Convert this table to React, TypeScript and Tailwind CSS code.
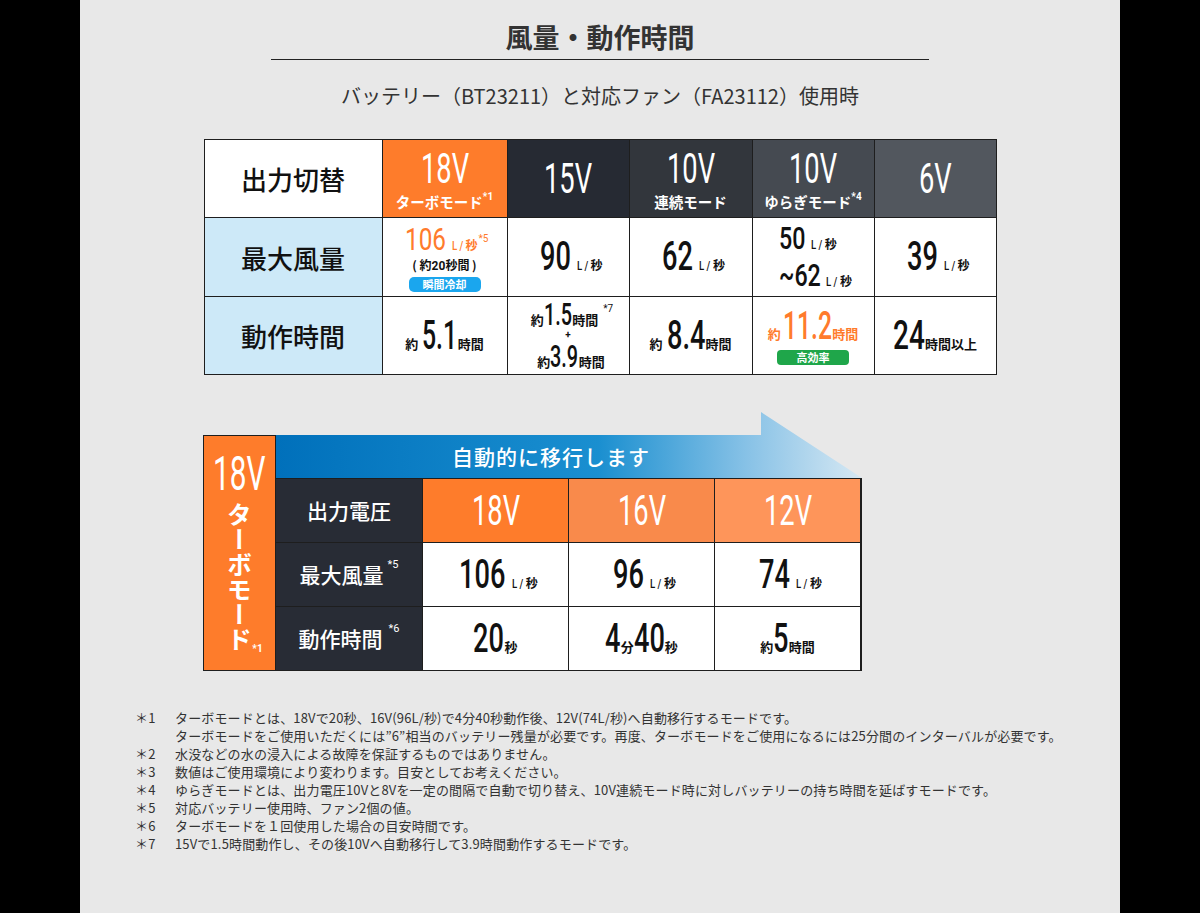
import React from "react"

const JP = "font-['Noto_Sans_CJK_JP','Noto_Sans',sans-serif]"
const RB = "font-['Roboto','Noto_Sans',sans-serif]"

// advance widths of Roboto glyphs, in em
const ADV: Record<string, number> = { ".": 0.263, V: 0.652, "~": 0.68, L: 0.538, "/": 0.41, " ": 0.248 }

// Roboto squeezed horizontally, to stand in for the condensed face of the print
function N({
  t,
  size,
  s = 0.68,
  className = "",
}: {
  t: string
  size: number
  s?: number
  className?: string
}) {
  const w = [...t].reduce((a, c) => a + (ADV[c] ?? 0.5615), 0) * size
  return (
    <span
      className={`${RB} inline-block origin-left whitespace-pre font-medium leading-none ${className}`}
      style={{ fontSize: size, transform: `scaleX(${s})`, marginRight: -w * (1 - s) }}
    >
      {t}
    </span>
  )
}

function Unit({ className = "" }: { className?: string }) {
  return (
    <span className={`ml-[6px] text-[12px] font-bold ${className}`}>
      <N t="L / " size={12} s={0.8} className="font-bold" />
      <span className={JP}>秒</span>
    </span>
  )
}

function Small({ children }: { children: React.ReactNode }) {
  return <span className={`${JP} text-[13px] font-bold leading-none`}>{children}</span>
}

function Sup({ children, className = "" }: { children: React.ReactNode; className?: string }) {
  return (
    <span className={`${RB} relative -top-[8px] text-[10px] font-bold leading-none ${className}`}>
      {children}
    </span>
  )
}

function HeadCell({ v, sub, bg }: { v: string; sub?: React.ReactNode; bg: string }) {
  return (
    <div className={`flex flex-col items-center justify-center text-white ${bg}`}>
      <N t={v} size={42} s={0.65} className="font-normal" />
      {sub && (
        <div className={`${JP} mt-[5px] text-[14.5px] font-bold leading-none`}>{sub}</div>
      )}
    </div>
  )
}

function Cell({ children, className = "" }: { children: React.ReactNode; className?: string }) {
  return (
    <div className={`flex flex-col items-center justify-center bg-white text-[#111] ${className}`}>
      {children}
    </div>
  )
}

function Label({ children, className = "" }: { children: React.ReactNode; className?: string }) {
  return (
    <div
      className={`${JP} flex items-center justify-center text-[26px] font-medium text-[#111] ${className}`}
    >
      {children}
    </div>
  )
}

function AirTable() {
  return (
    <div className="mx-auto mt-[30px] grid w-[793px] grid-cols-[177px_124px_121px_122px_121px_121px] grid-rows-[77px_78px_77px] gap-px bg-[#1e1e1e] p-px">
      <Label className="bg-white">出力切替</Label>
      <HeadCell
        v="18V"
        bg="bg-[#fe7c2b]"
        sub={
          <>
            ターボモード<Sup className="-top-[6px] text-[8px]">*1</Sup>
          </>
        }
      />
      <HeadCell v="15V" bg="bg-[#262a33]" />
      <HeadCell v="10V" bg="bg-[#32363c]" sub="連続モード" />
      <HeadCell
        v="10V"
        bg="bg-[#454a51]"
        sub={
          <>
            ゆらぎモード<Sup className="-top-[6px] text-[9px]">*4</Sup>
          </>
        }
      />
      <HeadCell v="6V" bg="bg-[#52575e]" />

      <Label className="bg-[#cde9f8]">最大風量</Label>
      <Cell>
        <div className="flex items-baseline pl-[4px] text-[#ff7b2c]">
          <N t="106" size={32} s={0.76} className="font-normal" />
          <Unit className="ml-[4px]" />
          <Sup className="ml-[1px] font-normal text-[#ff7b2c]">*5</Sup>
        </div>
        <div className={`${JP} mt-[4px] text-[12px] font-bold leading-none`}>
          ( 約<span className={RB}>20</span>秒間 )
        </div>
        <div
          className={`${JP} mt-[5px] flex h-[15px] w-[72px] items-center justify-center rounded-[5px] bg-[#1aa6ee] text-[11px] font-bold leading-none text-white`}
        >
          瞬間冷却
        </div>
      </Cell>
      <Cell>
        <div className="flex items-baseline pl-[6px]">
          <N t="90" size={40} />
          <Unit />
        </div>
      </Cell>
      <Cell>
        <div className="flex items-baseline pl-[6px]">
          <N t="62" size={40} />
          <Unit />
        </div>
      </Cell>
      <Cell className="items-start pl-[26px]">
        <div className="flex items-baseline">
          <N t="50" size={31} s={0.75} />
          <Unit />
        </div>
        <div className="mt-[6px] flex items-baseline">
          <N t="~62" size={31} s={0.75} />
          <Unit />
        </div>
      </Cell>
      <Cell>
        <div className="flex items-baseline pl-[6px]">
          <N t="39" size={40} />
          <Unit />
        </div>
      </Cell>

      <Label className="bg-[#cde9f8]">動作時間</Label>
      <Cell>
        <div className="flex items-baseline">
          <Small>約</Small>
          <N t="5.1" size={40} s={0.62} className="ml-[4px] mr-[1px]" />
          <Small>時間</Small>
        </div>
      </Cell>
      <Cell className="justify-start pt-[3px]">
        <div className="flex h-[30px] items-end pl-[8px]">
          <div className="flex items-baseline">
            <Small>約</Small>
            <N t="1.5" size={31} s={0.64} />
            <Small>時間</Small>
            <Sup className="ml-[5px] -top-[13px] font-normal">*7</Sup>
          </div>
        </div>
        <div className={`${RB} h-[10px] text-[10px] font-bold leading-[10px]`}>+</div>
        <div className="flex h-[32px] items-end pl-[6px]">
          <div className="flex items-baseline">
            <Small>約</Small>
            <N t="3.9" size={31} s={0.64} />
            <Small>時間</Small>
          </div>
        </div>
      </Cell>
      <Cell>
        <div className="flex items-baseline">
          <Small>約</Small>
          <N t="8.4" size={40} s={0.68} className="ml-[4px] mr-[1px]" />
          <Small>時間</Small>
        </div>
      </Cell>
      <Cell>
        <div className="flex items-baseline text-[#ff7b2c]">
          <Small>約</Small>
          <N t="11.2" size={38} s={0.65} className="ml-[2px] mr-[1px]" />
          <Small>時間</Small>
        </div>
        <div
          className={`${JP} mt-[5px] flex h-[15px] w-[72px] items-center justify-center rounded-[4px] bg-[#1fa64a] text-[11px] font-bold leading-none text-white`}
        >
          高効率
        </div>
      </Cell>
      <Cell>
        <div className="flex items-baseline">
          <N t="24" size={40} s={0.7} className="mr-[1px]" />
          <Small>時間以上</Small>
        </div>
      </Cell>
    </div>
  )
}

function Arrow() {
  return (
    <svg className="absolute bottom-0 left-0" width="586" height="66" viewBox="0 0 586 66">
      <defs>
        <linearGradient id="arrowFill" x1="0" y1="0" x2="1" y2="0">
          <stop offset="0" stopColor="#0070bb" />
          <stop offset="0.55" stopColor="#1a8fd0" />
          <stop offset="0.8" stopColor="#86c1e6" />
          <stop offset="1" stopColor="#d6e8f3" />
        </linearGradient>
      </defs>
      <polygon points="0,23 485,23 485,0 586,66 0,66" fill="url(#arrowFill)" />
    </svg>
  )
}

function DarkLabel({ children }: { children: React.ReactNode }) {
  return (
    <div
      className={`${JP} flex items-center justify-center bg-[#282c35] text-[21px] font-medium text-white`}
    >
      {children}
    </div>
  )
}

function TurboTable() {
  return (
    <div className="ml-[123px] mt-[60px] flex">
      <div className="flex h-[236px] w-[73px] flex-col items-center border border-[#1e1e1e] bg-[#fe7c2b] text-white">
        <N t="18V" size={48} s={0.62} className="mt-[14px] font-normal" />
        <div
          className={`${JP} mt-[4px] text-[25px] font-bold leading-[28px] [writing-mode:vertical-rl]`}
        >
          ターボモード
        </div>
        <Sup className="ml-[36px] -top-[2px] text-[8px]">*1</Sup>
      </div>
      <div className="flex flex-col">
        <div className="relative h-[43px] w-[586px]">
          <Arrow />
          <div
            className={`${JP} relative flex h-[43px] w-[550px] items-center justify-center pt-[1px] text-[21px] font-medium tracking-[1px] text-white`}
          >
            自動的に移行します
          </div>
        </div>
        <div className="grid grid-cols-[146px_145px_145px_145px] grid-rows-[63px_63px_63px] gap-px bg-[#1e1e1e] py-px pr-px">
          <DarkLabel>出力電圧</DarkLabel>
          <HeadCell v="18V" bg="bg-[#fe7c2b]" />
          <HeadCell v="16V" bg="bg-[#f98a4b]" />
          <HeadCell v="12V" bg="bg-[#fe955a]" />

          <DarkLabel>
            最大風量<Sup className="ml-[4px] -top-[10px] text-[11px] font-normal">*5</Sup>
          </DarkLabel>
          <Cell>
            <div className="flex items-baseline pl-[6px]">
              <N t="106" size={40} />
              <Unit />
            </div>
          </Cell>
          <Cell>
            <div className="flex items-baseline pl-[6px]">
              <N t="96" size={40} />
              <Unit />
            </div>
          </Cell>
          <Cell>
            <div className="flex items-baseline pl-[6px]">
              <N t="74" size={40} />
              <Unit />
            </div>
          </Cell>

          <DarkLabel>
            動作時間<Sup className="ml-[6px] -top-[10px] text-[11px] font-normal">*6</Sup>
          </DarkLabel>
          <Cell>
            <div className="flex items-baseline">
              <N t="20" size={40} className="mr-[1px]" />
              <Small>秒</Small>
            </div>
          </Cell>
          <Cell>
            <div className="flex items-baseline">
              <N t="4" size={40} className="mr-[1px]" />
              <Small>分</Small>
              <N t="40" size={40} className="mr-[1px]" />
              <Small>秒</Small>
            </div>
          </Cell>
          <Cell>
            <div className="flex items-baseline">
              <Small>約</Small>
              <N t="5" size={40} className="mr-[1px]" />
              <Small>時間</Small>
            </div>
          </Cell>
        </div>
      </div>
    </div>
  )
}

const notes: [string, string][] = [
  ["＊1", "ターボモードとは、18Vで20秒、16V(96L/秒)で4分40秒動作後、12V(74L/秒)へ自動移行するモードです。"],
  ["", "ターボモードをご使用いただくには”6”相当のバッテリー残量が必要です。再度、ターボモードをご使用になるには25分間のインターバルが必要です。"],
  ["＊2", "水没などの水の浸入による故障を保証するものではありません。"],
  ["＊3", "数値はご使用環境により変わります。目安としてお考えください。"],
  ["＊4", "ゆらぎモードとは、出力電圧10Vと8Vを一定の間隔で自動で切り替え、10V連続モード時に対しバッテリーの持ち時間を延ばすモードです。"],
  ["＊5", "対応バッテリー使用時、ファン2個の値。"],
  ["＊6", "ターボモードを１回使用した場合の目安時間です。"],
  ["＊7", "15Vで1.5時間動作し、その後10Vへ自動移行して3.9時間動作するモードです。"],
]

export default function App() {
  return (
    <div className="flex h-[913px] w-full bg-black">
      <div className="w-[80px] shrink-0 bg-black" />
      <main className="w-[1040px] shrink-0 bg-[#e8e8e8] text-[#333]">
        <h1
          className={`${JP} pt-[19px] text-center text-[27px] font-bold leading-[36px] text-[#333]`}
        >
          風量・動作時間
        </h1>
        <div className="mx-auto mt-[4px] w-[658px] border-b border-[#222]" />
        <p className={`${JP} mt-[23px] text-center text-[20px] leading-[26px] text-[#333]`}>
          バッテリー（BT23211）と対応ファン（FA23112）使用時
        </p>

        <AirTable />
        <TurboTable />

        <div
          className={`${JP} ml-[55px] mt-[38px] text-[13px] leading-[18px] tracking-[0.15px] text-[#333]`}
        >
          {notes.map(([k, t], i) => (
            <div key={i} className="flex">
              <span className="w-[40px] shrink-0">{k}</span>
              <span>{t}</span>
            </div>
          ))}
        </div>
      </main>
      <div className="w-[80px] shrink-0 bg-black" />
    </div>
  )
}
